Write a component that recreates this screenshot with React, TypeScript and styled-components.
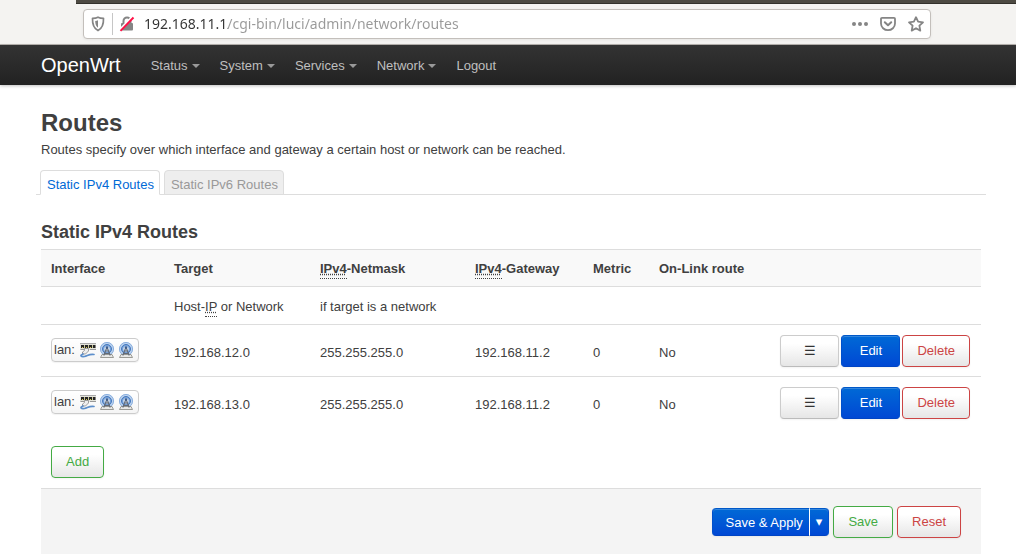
import React from 'react';
import styled, { createGlobalStyle, css } from 'styled-components';

const GlobalStyle = createGlobalStyle`
  *, *::before, *::after { box-sizing: border-box; }
  body {
    margin: 0;
    background: #fff;
    color: #404040;
    font: 13px/18px "Liberation Sans", Arial, sans-serif;
  }
`;

/* ---------- browser toolbar ---------- */

const Toolbar = styled.div`
  background: #f4f3f1;
  border-bottom: 1px solid #b9b5b1;
`;

const WindowEdge = styled.div`
  height: 4px;
  margin-left: 76px;
  background: #4d4a43;
  border-bottom: 1px solid #33312c;
`;

const AddressBar = styled.div`
  display: flex;
  align-items: center;
  height: 30px;
  margin: 5px 85px 5px 83px;
  padding: 0 5px 0 7px;
  background: #fff;
  border: 1px solid #c3bfbb;
  border-radius: 4px;
  box-shadow: 0 1px 3px rgba(0, 0, 0, 0.06);
  color: #858585;
`;

const Divider = styled.span`
  width: 1px;
  height: 22px;
  margin: 0 6px 0 7px;
  background: #c6c6c6;
`;

const Address = styled.input`
  flex: 1;
  min-width: 0;
  margin: 0 0 0 9px;
  padding: 0;
  border: 0;
  outline: 0;
  font: 14px/22px "Noto Sans", sans-serif;
  color: transparent;
  background: linear-gradient(90deg, #333 84px, #999 84px);
  -webkit-background-clip: text;
  background-clip: text;
`;

const BarButton = styled.button`
  display: flex;
  align-items: center;
  justify-content: center;
  width: 18px;
  height: 18px;
  margin: 0;
  padding: 0;
  border: 0;
  background: none;
  color: inherit;
`;

const PageActions = styled.div`
  display: flex;
  gap: 10px;
`;

/* ---------- navigation ---------- */

const Header = styled.header`
  display: flex;
  align-items: center;
  height: 40px;
  padding: 0 41px;
  background: linear-gradient(#333, #222);
  box-shadow: 0 1px 3px rgba(0, 0, 0, 0.25);
`;

const Brand = styled.a`
  margin-right: 20px;
  color: #fff;
  font-size: 20px;
  line-height: 24px;
  text-decoration: none;
`;

const Nav = styled.nav`
  display: flex;
  padding-top: 2px;
`;

const NavLink = styled.a<{ $menu?: boolean }>`
  display: flex;
  align-items: center;
  padding: 0 10px;
  color: #bfbfbf;
  text-decoration: none;

  ${(p) =>
    p.$menu &&
    css`
      &::after {
        content: '';
        margin-left: 4px;
        border: 4px solid transparent;
        border-top-color: #999;
        border-bottom: 0;
      }
    `}
`;

/* ---------- page ---------- */

const Main = styled.main`
  padding: 20px 35px 0 41px;
`;

const Title = styled.h2`
  margin: 0;
  font-size: 24px;
  line-height: 36px;
`;

const Description = styled.p`
  margin: 0 0 11px;
`;

const Tabs = styled.div`
  display: flex;
  gap: 4px;
  margin: 0 -5px 20px;
  padding: 0 4px;
  border-bottom: 1px solid #ddd;
`;

const Tab = styled.a<{ $active?: boolean }>`
  height: 25px;
  margin-bottom: -1px;
  padding: 5px 5px 0 6px;
  border: 1px solid #ddd;
  border-bottom-color: ${(p) => (p.$active ? '#fff' : '#ddd')};
  border-radius: 4px 4px 0 0;
  background: ${(p) => (p.$active ? '#fff' : '#eee')};
  color: ${(p) => (p.$active ? '#0069d6' : '#999')};
  text-decoration: none;
`;

const SectionTitle = styled.h3`
  margin: 0;
  font-size: 18px;
  line-height: 34px;
`;

const Table = styled.table`
  width: 100%;
  border-collapse: collapse;
  table-layout: fixed;

  th, td {
    padding: 10px 0 8px 10px;
    text-align: left;
    vertical-align: middle;
    border-top: 1px solid #ddd;
    white-space: nowrap;
  }
`;

const HeadRow = styled.tr`
  background: #f9f9f9;
  height: 37px;
`;

const HintRow = styled.tr`
  height: 38px;

  td { padding-top: 11px; }
`;

const RouteRow = styled.tr`
  height: 52px;

  td { padding: 12px 0 8px 10px; }
  td:first-child, td:last-child { padding: 0 11px 0 10px; }
  td:first-child { padding-bottom: 1px; }
`;

const Col = styled.col<{ $w?: number }>`
  ${(p) => p.$w && css`width: ${p.$w}px;`}
`;

const Abbr = styled.abbr`
  padding-bottom: 2px;
  text-decoration: underline dotted;
  border-bottom: 1px dotted #404040;
`;

const IfaceBadge = styled.span`
  display: inline-flex;
  align-items: center;
  gap: 3px;
  height: 24px;
  padding: 0 4px 0 2px;
  border: 1px solid #ccc;
  border-radius: 4px;
  background: linear-gradient(#fff, #f5f5f5);
  box-shadow: 0 1px 1px rgba(0, 0, 0, 0.05);
  vertical-align: middle;
`;

const IfaceName = styled.span`
  margin-right: 2px;
`;

type Kind = 'neutral' | 'primary' | 'positive' | 'negative';

const kinds = {
  neutral: css`
    color: #333;
    border-color: #ccc #ccc #bbb;
  `,
  primary: css`
    color: #fff;
    border-color: #0058c8 #0050cc #0044c4;
    background: linear-gradient(#0069d6, #0048d4);
  `,
  positive: css`
    color: #4a4;
    border-color: #4a4;
  `,
  negative: css`
    color: #c44;
    border-color: #c44;
  `,
};

const Button = styled.button<{ $kind: Kind; $wide?: boolean }>`
  height: 32px;
  min-width: ${(p) => (p.$wide ? 59 : 0)}px;
  margin: 0;
  padding: 0 14px;
  border: 1px solid;
  border-radius: 4px;
  background: linear-gradient(#fff, #fff 25%, #e6e6e6);
  box-shadow: inset 0 1px 0 rgba(255, 255, 255, 0.2), 0 1px 2px rgba(0, 0, 0, 0.05);
  font: 13px/18px "Liberation Sans", "DejaVu Sans", sans-serif;
  ${(p) => kinds[p.$kind]}
`;

const RowActions = styled.div`
  display: flex;
  justify-content: flex-end;
  gap: 2px;
`;

const AddBar = styled.div`
  padding: 17px 10px 10px;
`;

const Footer = styled.div`
  display: flex;
  align-items: center;
  justify-content: flex-end;
  gap: 4px;
  padding: 17px 20px 16px;
  border-top: 1px solid #ddd;
  background: #f4f4f4;
`;

const Split = styled.div`
  display: flex;
`;

const SplitButton = styled(Button)<{ $menu?: boolean }>`
  height: 28px;
  padding: ${(p) => (p.$menu ? '0 6px' : '2px 6px 0 13px')};
  border-radius: ${(p) => (p.$menu ? '0 4px 4px 0' : '4px 0 0 4px')};
  ${(p) => (p.$menu ? 'border-left-color: #fff;' : 'border-right: 0;')}
`;

/* ---------- drawings ---------- */

const ShieldIcon = () => (
  <svg width="14" height="16" viewBox="0 0 14 16" fill="none">
    <path d="M7 1.2C5.400 2 3.300 2.300 1.500 2.300C1.300 8 2.400 12.300 7 14.600C11.600 12.300 12.700 8 12.500 2.300C10.700 2.300 8.600 2 7 1.200Z" stroke="currentColor" strokeWidth="1.700" strokeLinejoin="round" />
    <path d="M7 4.200C6.200 4.600 5.200 4.800 4.200 4.900C4.300 8 5 10.300 7 11.800Z" fill="currentColor" />
  </svg>
);

const InsecureLockIcon = () => (
  <svg width="16" height="16" viewBox="0 0 16 16" fill="none">
    <path d="M4.500 7.500V5a3.500 3.500 0 0 1 7 0V7.500" stroke="currentColor" strokeWidth="2" />
    <rect x="2" y="7" width="12" height="7.500" rx="1" fill="currentColor" />
    <path d="M0.800 14L13.500 1" stroke="#fff" strokeWidth="2.600" />
    <path d="M1.500 14.800L14.500 1.500" stroke="#ff0f45" strokeWidth="1.900" />
  </svg>
);

const DotsIcon = () => (
  <svg width="16" height="16" viewBox="0 0 16 16" fill="currentColor">
    <circle cx="2" cy="8" r="2" />
    <circle cx="8" cy="8" r="2" />
    <circle cx="14" cy="8" r="2" />
  </svg>
);

const PocketIcon = () => (
  <svg width="16" height="16" viewBox="0 0 16 16" fill="none" stroke="currentColor" strokeLinecap="round" strokeLinejoin="round">
    <path d="M2 1.800H14a1 1 0 0 1 1 1V7.500a7 6.700 0 0 1-14 0V2.800a1 1 0 0 1 1-1Z" strokeWidth="1.800" />
    <path d="M4.800 6.300L8 9.300L11.200 6.300" strokeWidth="2" />
  </svg>
);

const StarIcon = () => (
  <svg width="18" height="18" viewBox="0 0 18 18" fill="none">
    <path d="M9 2.200L11.100 6.700L16 7.300L12.400 10.700L13.300 15.600L9 13.200L4.700 15.600L5.600 10.700L2 7.300L6.900 6.700Z" stroke="currentColor" strokeWidth="1.800" strokeLinejoin="round" />
  </svg>
);

const EthernetIcon = () => (
  <svg width="16" height="16" viewBox="0 0 16 16" fill="none">
    <rect x="0" y="1" width="16" height="7" fill="#e4e4dc" />
    <path d="M0 1.500H16" stroke="#aaa" />
    <path d="M1 3H15V6H1Z" fill="#c9c79a" />
    <path d="M1 3H4V6H1ZM5 3H8V6H5ZM9 3H12V6H9ZM13 3H15.500V6H13Z" fill="#252525" />
    <path d="M2 5.500H3M6 5.500H7M10 5.500H11" stroke="#d8c84c" />
    <path d="M0.500 7.500H4M10 7.500H16" stroke="#999" />
    <path d="M4.500 6.500H8.500V9L5.500 12H2.500V10L4.500 8.500Z" fill="#eee" stroke="#888" strokeWidth="0.800" />
    <path d="M3 12C-0.500 13.500 1 15 4.500 14.500C7.500 14 9 11.800 14 12.500" stroke="#5d8fcb" strokeWidth="1.700" strokeLinecap="round" />
  </svg>
);

const WirelessIcon = () => (
  <svg width="16" height="16" viewBox="0 0 16 16" fill="none">
    <circle cx="8" cy="7" r="7" fill="#c3d8f2" />
    <circle cx="8" cy="7" r="6.500" stroke="#86acdc" />
    <circle cx="8" cy="7" r="4.500" fill="#78a3da" stroke="#4478bd" />
    <circle cx="8" cy="7" r="2.700" fill="#dce9f8" />
    <path d="M3 12.500H13L14.500 15.500H1.500Z" fill="#e8e8e6" stroke="#85857f" strokeWidth="0.800" />
    <path d="M8 5L4.800 13.500M8 5L11.200 13.500M6.700 9H9.300M5.800 11.500H10.200" stroke="#626a76" strokeWidth="1.100" />
    <circle cx="8" cy="5.500" r="1.300" fill="#3d5e90" />
  </svg>
);

/* ---------- data ---------- */

const menus = ['Status', 'System', 'Services', 'Network'];

const routes = [
  { target: '192.168.12.0', netmask: '255.255.255.0', gateway: '192.168.11.2' },
  { target: '192.168.13.0', netmask: '255.255.255.0', gateway: '192.168.11.2' },
];

export default function App() {
  return (
    <>
      <GlobalStyle />
      <Toolbar>
        <WindowEdge />
        <AddressBar>
          <ShieldIcon />
          <Divider />
          <InsecureLockIcon />
          <Address
            aria-label="Address"
            defaultValue="192.168.11.1/cgi-bin/luci/admin/network/routes"
          />
          <PageActions>
            <BarButton aria-label="Page actions"><DotsIcon /></BarButton>
            <BarButton aria-label="Save to Pocket"><PocketIcon /></BarButton>
            <BarButton aria-label="Bookmark"><StarIcon /></BarButton>
          </PageActions>
        </AddressBar>
      </Toolbar>

      <Header>
        <Brand href="#">OpenWrt</Brand>
        <Nav>
          {menus.map((m) => (
            <NavLink key={m} href="#" $menu>{m}</NavLink>
          ))}
          <NavLink href="#">Logout</NavLink>
        </Nav>
      </Header>

      <Main>
        <Title>Routes</Title>
        <Description>
          Routes specify over which interface and gateway a certain host or network can be reached.
        </Description>
        <Tabs>
          <Tab href="#" $active>Static IPv4 Routes</Tab>
          <Tab href="#">Static IPv6 Routes</Tab>
        </Tabs>

        <SectionTitle>Static IPv4 Routes</SectionTitle>
        <Table>
          <colgroup>
            <Col $w={123} />
            <Col $w={146} />
            <Col $w={155} />
            <Col $w={118} />
            <Col $w={66} />
            <Col $w={110} />
            <Col />
          </colgroup>
          <thead>
            <HeadRow>
              <th>Interface</th>
              <th>Target</th>
              <th><Abbr>IPv4</Abbr>-Netmask</th>
              <th><Abbr>IPv4</Abbr>-Gateway</th>
              <th>Metric</th>
              <th>On-Link route</th>
              <th />
            </HeadRow>
          </thead>
          <tbody>
            <HintRow>
              <td />
              <td>Host-<Abbr>IP</Abbr> or Network</td>
              <td>if target is a network</td>
              <td />
              <td />
              <td />
              <td />
            </HintRow>
            {routes.map((r) => (
              <RouteRow key={r.target}>
                <td>
                  <IfaceBadge>
                    <IfaceName>lan:</IfaceName>
                    <EthernetIcon />
                    <WirelessIcon />
                    <WirelessIcon />
                  </IfaceBadge>
                </td>
                <td>{r.target}</td>
                <td>{r.netmask}</td>
                <td>{r.gateway}</td>
                <td>0</td>
                <td>No</td>
                <td>
                  <RowActions>
                    <Button $kind="neutral" $wide aria-label="Drag to reorder">☰</Button>
                    <Button $kind="primary" $wide>Edit</Button>
                    <Button $kind="negative">Delete</Button>
                  </RowActions>
                </td>
              </RouteRow>
            ))}
          </tbody>
        </Table>
        <AddBar>
          <Button $kind="positive">Add</Button>
        </AddBar>
        <Footer>
          <Split>
            <SplitButton $kind="primary">Save &amp; Apply</SplitButton>
            <SplitButton $kind="primary" $menu aria-label="More apply options">▾</SplitButton>
          </Split>
          <Button $kind="positive">Save</Button>
          <Button $kind="negative">Reset</Button>
        </Footer>
      </Main>
    </>
  );
}
